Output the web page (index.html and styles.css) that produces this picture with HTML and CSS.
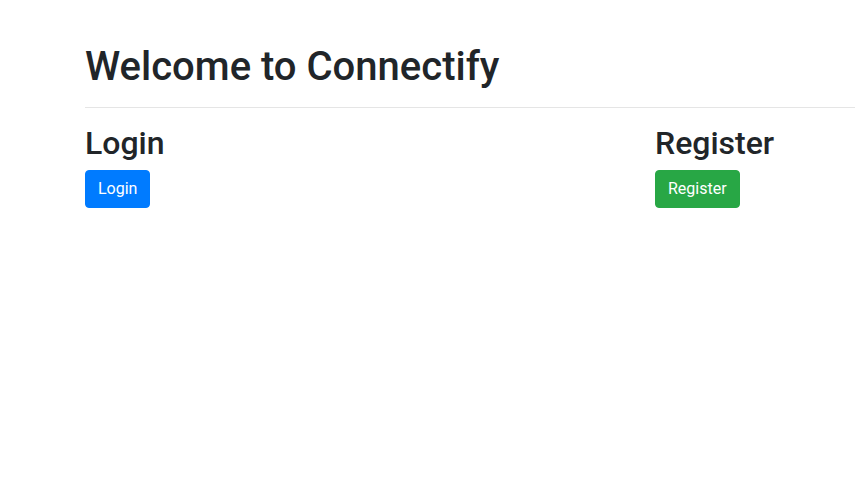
FILE: index.html
```html
<!DOCTYPE html>
<html lang="en">
<head>
<meta charset="utf-8">
<title>Connectify</title>
<link rel="stylesheet" href="styles.css">
</head>
<body>
<div class="container">
  <h1 class="title">Welcome to Connectify</h1>
  <hr class="rule">
  <div class="row">
    <div class="col">
      <h2 class="section-title">Login</h2>
      <button class="btn btn-primary" type="button">Login</button>
    </div>
    <div class="col">
      <h2 class="section-title">Register</h2>
      <button class="btn btn-success" type="button">Register</button>
    </div>
  </div>
</div>
</body>
</html>
```

FILE: styles.css
```css
html, body {
  margin: 0;
  padding: 0;
  background: #fff;
}
body {
  font-family: Roboto, "Liberation Sans", sans-serif;
  font-size: 16px;
  line-height: 1.5;
  color: #212529;
}
.container {
  padding: 43px 0 0 85px;
}
.title {
  font-size: 40px;
  font-weight: 500;
  line-height: 1.2;
  margin: 0 0 8px;
}
.rule {
  margin: 16px 0;
  border: 0;
  border-top: 1px solid rgba(0, 0, 0, 0.1);
  height: 0;
  box-sizing: content-box;
}
.row {
  display: grid;
  grid-template-columns: 570px 1fr;
}
.section-title {
  font-size: 32px;
  font-weight: 500;
  line-height: 1.2;
  margin: 0 0 8px;
}
.btn {
  display: inline-block;
  font-family: inherit;
  font-size: 16px;
  font-weight: 400;
  line-height: 1.5;
  padding: 6px 12px;
  border: 1px solid transparent;
  border-radius: 4px;
  color: #fff;
  cursor: pointer;
  margin: 0;
}
.btn-primary {
  background: #007bff;
  border-color: #007bff;
}
.btn-success {
  background: #28a745;
  border-color: #28a745;
}
```
